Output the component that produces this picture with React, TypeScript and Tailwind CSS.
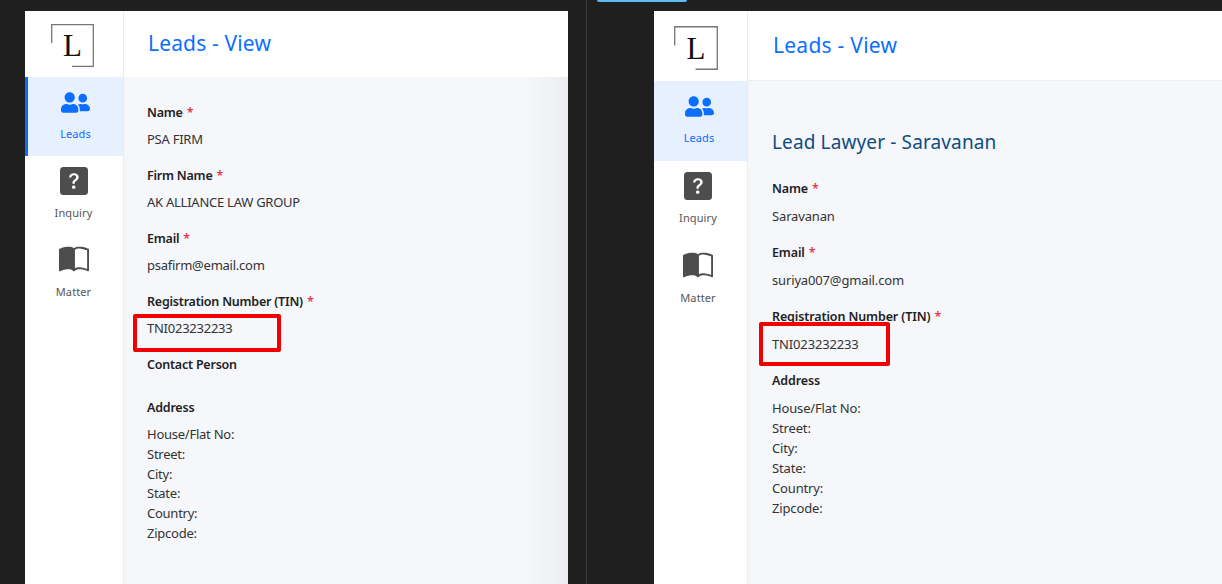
import type { ReactNode } from 'react';
import { FaUserFriends } from 'react-icons/fa';
import { BsBookHalf, BsQuestionSquareFill } from 'react-icons/bs';

function Logo({ size }: { size: number }) {
    return (
        <div className="relative" style={{ width: size, height: size }}>
            <svg viewBox="0 0 43 43" className="w-full h-full" fill="none" stroke="#777" strokeWidth="1.3">
                <path d="M0.7 19V0.7H42.3V42.3H21" />
            </svg>
            <span className="absolute inset-0 flex items-center justify-center font-['Liberation_Serif',serif] text-[31px] leading-none text-[#111]">
                L
            </span>
        </div>
    );
}

function Sidebar({ right }: { right?: boolean }) {
    return (
        <aside className={`${right ? 'w-[94px]' : 'w-[99px]'} shrink-0 bg-white border-r border-[#e9ecef] flex flex-col`}>
            <div className={`${right ? 'h-[70px] pl-[20px] pt-[15px]' : 'h-[66px] pl-[26px] pt-[13px]'}`}>
                <Logo size={right ? 44 : 43} />
            </div>
            <div
                className={`${right ? 'h-[80px]' : 'h-[79px] border-l-[3px] border-[#0d6efd]'} pt-[11px] bg-[#e6f0ff] flex flex-col items-center text-[#0d6efd]`}
            >
                <FaUserFriends className={`text-[29px] ${right ? '-ml-[3px]' : '-ml-[1px]'}`} />
                <span className={`mt-[9px] text-[11px] leading-[16px] tracking-[0.1px] ${right ? '-ml-[3px]' : ''}`}>Leads</span>
            </div>
            <div className={`flex flex-col items-center text-[#555] pt-[11px] ${right ? '-ml-[5px]' : '-ml-[1px]'}`}>
                <BsQuestionSquareFill className="text-[28px] text-[#4d4d4d]" />
                <span className="mt-[10px] text-[11px] leading-[16px] tracking-[0.1px]">Inquiry</span>
            </div>
            <div className={`flex flex-col items-center text-[#555] ${right ? 'pt-[25px] -ml-[5px]' : 'pt-[24px] -ml-[1px]'}`}>
                <BsBookHalf className="text-[30px] text-[#4d4d4d]" />
                <span className="mt-[9px] text-[11px] leading-[16px] tracking-[0.1px]">Matter</span>
            </div>
        </aside>
    );
}

function Label({ children, right }: { children: ReactNode; right?: boolean }) {
    return (
        <div className={`h-[20px] text-[12.5px] leading-[22px] font-semibold text-[#222] ${right ? 'tracking-[-0.12px]' : 'tracking-[-0.22px]'}`}>
            {children}
        </div>
    );
}

function Field({ label, value, right }: { label: string; value: string; right?: boolean }) {
    return (
        <div className={right ? 'h-[64px]' : 'h-[63px]'}>
            <Label right={right}>
                {label}
                <span className="text-[#e0364f] ml-[4px]">*</span>
            </Label>
            <div className={`h-[20px] text-[13px] leading-[20px] text-[#333] ${right ? 'mt-[8px] tracking-[-0.15px]' : 'mt-[7px] tracking-[-0.25px]'}`}>
                {value}
            </div>
        </div>
    );
}

const addressRows = ['House/Flat No:', 'Street:', 'City:', 'State:', 'Country:', 'Zipcode:'];

function Address({ right }: { right?: boolean }) {
    return (
        <div>
            <Label right={right}>Address</Label>
            <div
                className={`flex flex-col text-[13px] text-[#333] mt-[8px] ${right ? 'leading-[20px] tracking-[-0.15px]' : 'leading-[19.8px] tracking-[-0.25px]'}`}
            >
                {addressRows.map((r) => (
                    <div key={r}>{r}</div>
                ))}
            </div>
        </div>
    );
}

export default function App() {
    return (
        <div className="relative h-[584px] w-[1222px] overflow-hidden bg-[#1f1f1f] font-['Noto_Sans',sans-serif]">
            <div className="absolute left-[597px] top-0 h-[2px] w-[90px] rounded-b bg-[#5bbcf5]" />
            <div className="absolute left-[586px] top-0 h-full w-px bg-[#3a3a3a]" />

            <div className="flex h-full pt-[11px] pl-[25px]">
                {/* left window */}
                <div className="flex w-[543px] shrink-0">
                    <Sidebar />
                    <main className="relative flex-1 bg-[#f5f7fb] flex flex-col">
                        <header className="h-[66px] bg-white pl-[24px] flex items-center text-[21px] tracking-[0.15px] text-[#0d6efd]">
                            Leads - View
                        </header>
                        <div className="pl-[23px] pt-[25px] flex flex-col">
                            <Field label="Name" value="PSA FIRM" />
                            <Field label="Firm Name" value="AK ALLIANCE LAW GROUP" />
                            <Field label="Email" value="psafirm@email.com" />
                            <Field label="Registration Number (TIN)" value="TNI023232233" />
                            <div className="h-[43px]">
                                <Label>Contact Person</Label>
                            </div>
                            <Address />
                        </div>
                        <div className="absolute right-0 top-[66px] bottom-0 w-[45px] bg-gradient-to-r from-transparent to-black/[0.04]" />
                    </main>
                </div>

                {/* right window */}
                <div className="ml-[86px] flex flex-1">
                    <Sidebar right />
                    <main className="flex-1 bg-[#f5f7fb] flex flex-col">
                        <header className="h-[70px] bg-white border-b border-[#eceef2] pl-[25px] flex items-center text-[21px] tracking-[0.25px] text-[#0d6efd]">
                            Leads - View
                        </header>
                        <div className="pl-[24px] pt-[46px] flex flex-col">
                            <h2 className="h-[30px] text-[19px] leading-[30px] tracking-[0.13px] text-[#0f4c81]">Lead Lawyer - Saravanan</h2>
                            <div className="mt-[21px]">
                                <Field right label="Name" value="Saravanan" />
                                <Field right label="Email" value="suriya007@gmail.com" />
                                <Field right label="Registration Number (TIN)" value="TNI023232233" />
                                <Address right />
                            </div>
                        </div>
                    </main>
                </div>
            </div>

            {/* red annotation boxes */}
            <div className="absolute left-[133px] top-[314px] h-[38px] w-[148px] rounded-[2px] border-[4px] border-[#f00000]" />
            <div className="absolute left-[759px] top-[322px] h-[44px] w-[131px] rounded-[2px] border-[4px] border-[#f00000]" />
        </div>
    );
}
